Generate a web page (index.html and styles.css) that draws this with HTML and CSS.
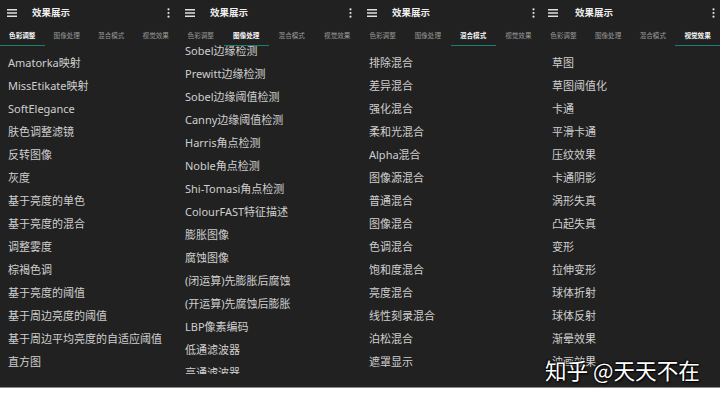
FILE: index.html
```html
<!DOCTYPE html>
<html lang="zh-CN">
<head>
<meta charset="utf-8">
<title>效果展示</title>
<link rel="stylesheet" href="styles.css">
</head>
<body>
<div class="screens">
  <section class="phone p1">
    <header class="toolbar">
      <svg class="menu" width="10" height="8" viewBox="0 0 10 8"><path d="M0 0.75h10M0 4h10M0 7.25h10" stroke="#e0e0e0" stroke-width="1.3"/></svg>
      <h1 class="title">效果展示</h1>
      <svg class="more" width="3" height="10" viewBox="0 0 3 10"><circle cx="1.5" cy="1.3" r="1.1" fill="#e0e0e0"/><circle cx="1.5" cy="5" r="1.1" fill="#e0e0e0"/><circle cx="1.5" cy="8.7" r="1.1" fill="#e0e0e0"/></svg>
    </header>
    <nav class="tabs"><span class="tab active">色彩调整</span><span class="tab">图像处理</span><span class="tab">混合模式</span><span class="tab">视觉效果</span></nav>
    <ul class="list">
      <li>Amatorka映射</li><li>MissEtikate映射</li><li>SoftElegance</li><li>肤色调整滤镜</li><li>反转图像</li><li>灰度</li><li>基于亮度的单色</li><li>基于亮度的混合</li><li>调整雾度</li><li>棕褐色调</li><li>基于亮度的阈值</li><li>基于周边亮度的阈值</li><li>基于周边平均亮度的自适应阈值</li><li>直方图</li>
    </ul>
  </section>
  <section class="phone p2">
    <header class="toolbar">
      <svg class="menu" width="10" height="8" viewBox="0 0 10 8"><path d="M0 0.75h10M0 4h10M0 7.25h10" stroke="#e0e0e0" stroke-width="1.3"/></svg>
      <h1 class="title">效果展示</h1>
      <svg class="more" width="3" height="10" viewBox="0 0 3 10"><circle cx="1.5" cy="1.3" r="1.1" fill="#e0e0e0"/><circle cx="1.5" cy="5" r="1.1" fill="#e0e0e0"/><circle cx="1.5" cy="8.7" r="1.1" fill="#e0e0e0"/></svg>
    </header>
    <nav class="tabs"><span class="tab">色彩调整</span><span class="tab active">图像处理</span><span class="tab">混合模式</span><span class="tab">视觉效果</span></nav>
    <ul class="list scrolled">
      <li>Sobel边缘检测</li><li>Prewitt边缘检测</li><li>Sobel边缘阈值检测</li><li>Canny边缘阈值检测</li><li>Harris角点检测</li><li>Noble角点检测</li><li>Shi-Tomasi角点检测</li><li>ColourFAST特征描述</li><li>膨胀图像</li><li>腐蚀图像</li><li>(闭运算)先膨胀后腐蚀</li><li>(开运算)先腐蚀后膨胀</li><li>LBP像素编码</li><li>低通滤波器</li><li>高通滤波器</li>
    </ul>
  </section>
  <section class="phone p3">
    <header class="toolbar">
      <svg class="menu" width="10" height="8" viewBox="0 0 10 8"><path d="M0 0.75h10M0 4h10M0 7.25h10" stroke="#e0e0e0" stroke-width="1.3"/></svg>
      <h1 class="title">效果展示</h1>
      <svg class="more" width="3" height="10" viewBox="0 0 3 10"><circle cx="1.5" cy="1.3" r="1.1" fill="#e0e0e0"/><circle cx="1.5" cy="5" r="1.1" fill="#e0e0e0"/><circle cx="1.5" cy="8.7" r="1.1" fill="#e0e0e0"/></svg>
    </header>
    <nav class="tabs"><span class="tab">色彩调整</span><span class="tab">图像处理</span><span class="tab active">混合模式</span><span class="tab">视觉效果</span></nav>
    <ul class="list">
      <li>排除混合</li><li>差异混合</li><li>强化混合</li><li>柔和光混合</li><li>Alpha混合</li><li>图像源混合</li><li>普通混合</li><li>图像混合</li><li>色调混合</li><li>饱和度混合</li><li>亮度混合</li><li>线性刻录混合</li><li>泊松混合</li><li>遮罩显示</li>
    </ul>
  </section>
  <section class="phone p4">
    <header class="toolbar">
      <svg class="menu" width="10" height="8" viewBox="0 0 10 8"><path d="M0 0.75h10M0 4h10M0 7.25h10" stroke="#e0e0e0" stroke-width="1.3"/></svg>
      <h1 class="title">效果展示</h1>
      <svg class="more" width="3" height="10" viewBox="0 0 3 10"><circle cx="1.5" cy="1.3" r="1.1" fill="#e0e0e0"/><circle cx="1.5" cy="5" r="1.1" fill="#e0e0e0"/><circle cx="1.5" cy="8.7" r="1.1" fill="#e0e0e0"/></svg>
    </header>
    <nav class="tabs"><span class="tab">色彩调整</span><span class="tab">图像处理</span><span class="tab">混合模式</span><span class="tab active">视觉效果</span></nav>
    <ul class="list">
      <li>草图</li><li>草图阈值化</li><li>卡通</li><li>平滑卡通</li><li>压纹效果</li><li>卡通阴影</li><li>涡形失真</li><li>凸起失真</li><li>变形</li><li>拉伸变形</li><li>球体折射</li><li>球体反射</li><li>渐晕效果</li><li>油画效果</li>
    </ul>
  </section>
</div>
<div class="watermark">知乎 @天天不在</div>
</body>
</html>
```

FILE: styles.css
```css
* { box-sizing: border-box; }
html, body { margin: 0; padding: 0; }
body {
  width: 720px;
  height: 401px;
  background: #ffffff;
  overflow: hidden;
  position: relative;
  font-family: "Noto Sans", "Noto Sans CJK SC", sans-serif;
}
.screens {
  display: flex;
  width: 720px;
  height: 388px;
  border-bottom: 1px solid #8c8c8c;
}
.phone {
  height: 387px;
  background: #212121;
  display: flex;
  flex-direction: column;
  overflow: hidden;
}
.p1 { width: 178px; }
.p2 { width: 182px; }
.p3 { width: 181px; }
.p4 { width: 179px; }

.toolbar {
  height: 25px;
  display: flex;
  align-items: center;
  padding: 0 8px 0 7px;
  flex: none;
}
.menu { flex: none; }
.title {
  margin: 0 0 0 15px;
  font-family: "Noto Sans CJK SC", sans-serif;
  font-size: 9.5px;
  font-weight: 700;
  color: #f0f0f0;
  flex: 1;
  line-height: 1;
}
.more { flex: none; }
.p3 .toolbar { padding-right: 6px; }
.p4 .toolbar { padding-right: 5px; padding-left: 7px; }
.p4 .title { margin-left: 17px; }

.tabs {
  display: flex;
  flex: none;
  position: relative;
  z-index: 1;
}
.tab {
  flex: 1;
  text-align: center;
  font-family: "Noto Sans CJK SC", sans-serif;
  font-size: 6.6px;
  line-height: 12px;
  padding: 4px 0;
  color: #9a9a9a;
  border-bottom: 1.6px solid transparent;
}
.tab.active {
  color: #f4f4f4;
  font-weight: 700;
  border-bottom-color: #1d7f71;
}

.list {
  list-style: none;
  margin: 0;
  padding: 5px 0 0 8px;
  height: 328px;
  overflow: hidden;
  flex: none;
}
.list li {
  height: 23px;
  line-height: 23px;
  font-size: 11px;
  color: #cfcfcf;
  white-space: nowrap;
}
.list.scrolled {
  margin-top: -12px;
  height: 340px;
  padding-left: 7px;
}
.p3 .list { padding-left: 9px; }
.p4 .list { padding-left: 11px; }

.watermark {
  position: absolute;
  left: 545px;
  top: 358px;
  font-family: "Noto Sans CJK SC", sans-serif;
  font-size: 21.6px;
  line-height: 24px;
  color: #ffffff;
  white-space: nowrap;
  text-shadow: 0 0 2px #000, 1px 1px 2px #000, -1px -1px 1px #111;
}
```
